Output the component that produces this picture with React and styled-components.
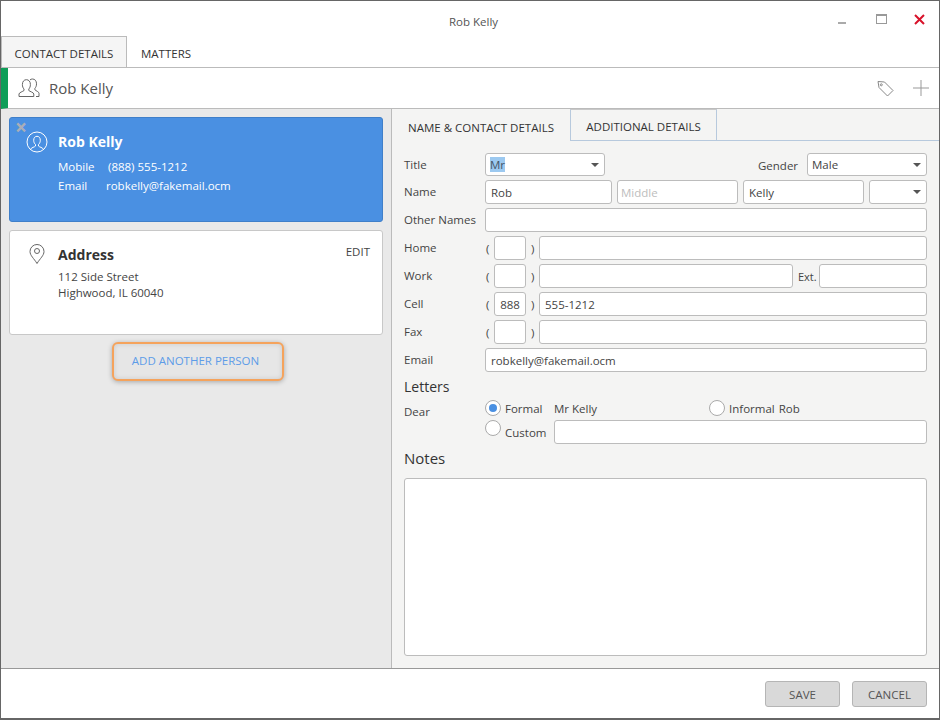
import React from "react";
import styled, { createGlobalStyle } from "styled-components";

const Global = createGlobalStyle`
  html, body { margin: 0; padding: 0; background: #fff; }
  * { box-sizing: border-box; }
  body { font-family: "Open Sans", "Noto Sans", "Liberation Sans", sans-serif; font-size: 11.5px; color: #444; }
`;

const Win = styled.div`
  width: 940px; height: 720px; display: flex; flex-direction: column;
  border: 1px solid #666; border-bottom-width: 2px; border-top-width: 1px; background: #fff; overflow: hidden;
`;
const TitleBar = styled.div`
  height: 35px; flex: none; display: flex; align-items: center; justify-content: center; position: relative; color: #555; font-size: 11.5px;
  padding-top: 6px; padding-left: 7px;
`;
const WinButtons = styled.div`
  position: absolute; right: 0; top: 0; display: block;
`;
const WinSvg = styled.svg`
  display: block; width: 160px; height: 36px;
`;
const TopTabs = styled.div`
  height: 32px; flex: none; display: flex; border-bottom: 1px solid #bbb;
`;
const TopTab = styled.div`
  height: 32px; display: flex; align-items: center; justify-content: center; color: #333; font-size: 11.5px; padding-top: 2px;
  width: ${p => p.$w}px;
  ${p => p.$active ? "background:#f5f5f5;border:1px solid #bbb;border-bottom:1px solid #bbb;" : "padding-right:2px;"}
`;
const Header = styled.div`
  height: 41px; flex: none; display: flex; align-items: center; border-bottom: 1px solid #bbb; border-left: 7px solid #0f9d58;
  padding-left: 10px; padding-right: 10px;
`;
const HeaderName = styled.div`
  font-size: 15px; color: #555; margin-left: 9px; flex: 1; font-weight: 500;
`;
const HeaderIcons = styled.div`
  display: flex; align-items: center; gap: 19px;
`;
const Body = styled.div`
  flex: 1; display: flex; min-height: 0;
`;
const Left = styled.div`
  width: 391px; flex: none; background: #e9e9e9; border-right: 1px solid #bbb; padding: 8px 8px 0 8px;
  display: flex; flex-direction: column; align-items: center;
`;
const Card = styled.div`
  position: relative; width: 100%; flex: none; height: 105px; border-radius: 3px; margin-bottom: ${p => p.$mb}px;
  display: grid; grid-template-columns: 48px 1fr; padding-top: 13px;
  background: ${p => p.$blue ? "#4a90e2" : "#fff"};
  border: 1px solid ${p => p.$blue ? "#3f7fc9" : "#c8c8c8"};
  color: ${p => p.$blue ? "#fff" : "#444"};
`;
const CardIcon = styled.div`
  display: flex; justify-content: center; padding-left: 5px;
`;
const Close = styled.div`
  position: absolute; left: 5px; top: 1px; color: #a9aeb8; font-size: 21px; font-weight: 700; line-height: 16px;
`;
const CardTitle = styled.div`
  font-size: 14px; font-weight: 700; line-height: 20px; margin-top: 1px; margin-bottom: ${p => p.$blue ? 5 : 4}px; color: ${p => p.$blue ? "#fff" : "#333"};
`;
const InfoRow = styled.div`
  display: flex; line-height: 19px; font-size: 11.5px;
`;
const InfoLabel = styled.span`
  width: ${p => p.$w}px; flex: none;
`;
const AddrLine = styled.div`
  line-height: 16px; font-size: 11.5px; color: #444;
`;
const Edit = styled.div`
  position: absolute; right: 12px; top: 13px; font-size: 11.5px; color: #444;
`;
const AddButton = styled.div`
  width: 172px; height: 39px; margin-top: -2px; margin-left: 4px; padding: 0 5px 2px 0; border: 2px solid #f5a35c; border-radius: 6px; color: #5d9ce8;
  display: flex; align-items: center; justify-content: center; font-size: 11.5px; background: #e6e6e6;
  box-shadow: 0 1px 5px rgba(0,0,0,.28), inset 0 0 5px rgba(0,0,0,.12);
`;
const Right = styled.div`
  width: 547px; flex: none; background: #f4f4f3; display: flex; flex-direction: column;
`;
const SubTabs = styled.div`
  height: 32px; flex: none; display: flex; 
`;
const SubTab = styled.div`
  height: 32px; display: flex; align-items: center; justify-content: center; color: #333; font-size: 11.5px;
  width: ${p => p.$w}px;
  ${p => p.$active ? "padding-top:5px;" : "border:1px solid #b7c9dd;border-top-color:#c8c8c8;padding-top:2px;"}
`;
const SubFill = styled.div`
  flex: 1; border-bottom: 1px solid #b7c9dd;
`;
const Form = styled.div`
  flex: 1; display: flex; flex-direction: column; padding: 12px; min-height: 0;
`;
const Row = styled.div`
  display: flex; align-items: stretch; height: ${p => p.$h || 24}px; margin-bottom: ${p => p.$mb ?? 4}px; gap: 5px;
`;
const Label = styled.div`
  width: 76px; flex: none; display: flex; align-items: center; color: #444; padding-bottom: 1px; font-size: 11.5px;
`;
const Input = styled.input`
  flex: ${p => p.$w ? "none" : "1"}; width: ${p => p.$w ? p.$w + "px" : "auto"}; min-width: 0; height: 100%;
  border: 1px solid #bcbcbc; border-radius: 3px; background: #fff; padding: 1px 0 0 ${p => p.$pl ?? 5}px;
  font: inherit; font-size: 11.5px; color: #444; outline: none;
  &::placeholder { color: #bdbdbd; opacity: 1; }
`;
const Select = styled.div`
  flex: none; width: ${p => p.$w}px; position: relative; display: flex; align-items: center; padding-left: 4px;
  height: 100%; border: 1px solid #bcbcbc; border-radius: 3px; background: #fff; color: #444; font-size: 11.5px;
  &::after {
    content: ""; position: absolute; right: 5px; top: 50%; margin-top: -2px;
    border-left: 4px solid transparent; border-right: 4px solid transparent; border-top: 4px solid #555;
  }
`;
const Selected = styled.span`
  background: #9cc9f0; color: #456; 
`;
const GenderLabel = styled.div`
  margin-left: auto; width: 44px; display: flex; align-items: center; color: #444; padding-top: 1px;
`;
const Paren = styled.div`
  width: ${p => p.$w}px; flex: none; display: flex; align-items: center; color: #444; padding-left: ${p => p.$pl || 0}px;
`;
const PhoneArea = styled(Input)`
  padding-left: 0; text-align: center;
`;
const ExtLabel = styled.div`
  flex: none; width: 20px; display: flex; align-items: center; color: #444; font-size: 11px; margin-right: -4px;
`;
const Heading = styled.div`
  color: #333; font-size: ${p => p.$s}px; line-height: 20px; margin-top: ${p => p.$mt}px; margin-bottom: ${p => p.$mb}px;
`;
const LetterGrid = styled.div`
  display: grid; grid-template-columns: 81px 69px 155px minmax(0, 1fr); grid-template-rows: 22px 24px;
`;
const DearLabel = styled.div`
  color: #444; line-height: 20px; padding-top: 4px;
`;
const RadioWrap = styled.div`
  display: flex; height: ${p => p.$top ? 24 : 20}px; align-items: ${p => p.$top ? "flex-start" : "center"}; gap: 4px; color: #444; white-space: nowrap;
`;
const Radio = styled.span`
  width: 16px; height: 16px; border-radius: 50%; border: 1px solid #aaa; background: #fff; flex: none; position: relative;
  ${p => p.$on ? `
    &::after { content: ""; position: absolute; left: 3px; top: 3px; width: 8px; height: 8px; border-radius: 50%; background: #4a90e2; }
  ` : ""}
`;
const GridText = styled.div`
  display: flex; height: 20px; align-items: center; color: #444; gap: 4px;
`;
const CustomText = styled.span`
  padding-top: 5px;
`;
const WideInput = styled(Input)`
  grid-column: 3 / 5; height: 24px;
`;
const Notes = styled.textarea`
  flex: 1; resize: none; border: 1px solid #bcbcbc; border-radius: 3px; background: #fff; outline: none; width: 100%;
`;
const Footer = styled.div`
  height: 50px; flex: none; border-top: 1px solid #999; background: #fff; display: flex; justify-content: flex-end; align-items: flex-start;
  padding: 12px 12px 0 0; gap: 12px;
`;
const Btn = styled.div`
  width: 75px; height: 26px; background: #d9d9d9; border: 1px solid #b5b5b5; border-radius: 3px; color: #555;
  display: flex; align-items: center; justify-content: center; font-size: 11.5px; font-weight: 500;
`;

const Users = () => (
  <svg width="22" height="20" viewBox="0 0 22 20" fill="none" stroke="#666" strokeWidth="1">
    <path d="M1 18.500v-2.500c0-1.500 4-2.500 5-3.500v-1.500c-1-1-1.600-2.500-1.600-4.500 0-3 1.600-4.800 4-4.800s4 1.800 4 4.800c0 2-.6 3.500-1.600 4.500v1.500c1 1 5 2 5 3.500v2.500z"/>
    <path d="M12 1.900c.7-.6 1.500-.9 2.500-.9 2.400 0 4 1.800 4 4.800 0 2-.6 3.500-1.600 4.500v1.500c1 1 4.100 2 4.100 3.500v3.200h-3"/>
  </svg>
);
const PersonCircle = () => (
  <svg width="22" height="22" viewBox="0 0 22 22" fill="none" stroke="#fff" strokeWidth="1">
    <circle cx="11" cy="11" r="10"/>
    <path d="M4.500 18.500c.5-2 4.500-2.500 5-3.500v-1.500c-1-.8-1.800-2.300-1.800-4.200 0-2.500 1.300-4 3.300-4s3.300 1.500 3.300 4c0 1.900-.8 3.400-1.800 4.200v1.500c.5 1 4.500 1.500 5 3.500"/>
  </svg>
);
const Pin = () => (
  <svg width="16" height="20" viewBox="0 0 16 20" fill="none" stroke="#666" strokeWidth="1">
    <path d="M8 19.500C5 14.500 1 11.500 1 7.500a7 7 0 0 1 14 0c0 4-4 7-7 12z"/>
    <circle cx="8" cy="7" r="2.500"/>
  </svg>
);
const Tag = () => (
  <svg width="17" height="17" viewBox="0 0 17 17" fill="none" stroke="#888" strokeWidth="1">
    <path d="M1 1.500l6.500.5 8.500 8.500-5.500 5.500L2 7.500z"/>
    <circle cx="4.300" cy="4.800" r="1"/>
  </svg>
);
const Plus = () => (
  <svg width="16" height="16" viewBox="0 0 16 16" stroke="#999" strokeWidth="1">
    <path d="M8 0v16M0 8h16"/>
  </svg>
);

const Phone = ({ label, area, num, children }) => (
  <Row>
    <Label>{label}</Label>
    <Paren $w={4} $pl={1}>(</Paren>
    <PhoneArea $w={32} defaultValue={area} readOnly />
    <Paren $w={3} $pl={0}>)</Paren>
    {children || <Input defaultValue={num} readOnly />}
  </Row>
);

export default function App() {
  return (
    <Win>
      <Global />
      <TitleBar>
        Rob Kelly
        <WinButtons>
          <WinSvg viewBox="0 0 160 36">
            <rect x="59" y="21" width="8" height="2" fill="#aaa" />
            <rect x="97.500" y="13.500" width="10" height="9" fill="none" stroke="#999" />
            <rect x="97" y="13" width="11" height="2" fill="#999" />
            <path d="M136 14l9 9M145 14l-9 9" stroke="#d8122a" strokeWidth="2" />
          </WinSvg>
        </WinButtons>
      </TitleBar>
      <TopTabs>
        <TopTab $active $w={126}>CONTACT DETAILS</TopTab>
        <TopTab $w={80}>MATTERS</TopTab>
      </TopTabs>
      <Header>
        <Users />
        <HeaderName>Rob Kelly</HeaderName>
        <HeaderIcons><Tag /><Plus /></HeaderIcons>
      </Header>
      <Body>
        <Left>
          <Card $blue $mb={8}>
            <Close>×</Close>
            <CardIcon><PersonCircle /></CardIcon>
            <div>
              <CardTitle $blue>Rob Kelly</CardTitle>
              <InfoRow><InfoLabel $w={50}>Mobile</InfoLabel>(888) 555-1212</InfoRow>
              <InfoRow><InfoLabel $w={48}>Email</InfoLabel>robkelly@fakemail.ocm</InfoRow>
            </div>
          </Card>
          <Card $mb={9}>
            <CardIcon><Pin /></CardIcon>
            <div>
              <CardTitle>Address</CardTitle>
              <AddrLine>112 Side Street</AddrLine>
              <AddrLine>Highwood, IL 60040</AddrLine>
            </div>
            <Edit>EDIT</Edit>
          </Card>
          <AddButton>ADD ANOTHER PERSON</AddButton>
        </Left>
        <Right>
          <SubTabs>
            <SubTab $active $w={178}>NAME &amp; CONTACT DETAILS</SubTab>
            <SubTab $w={147}>ADDITIONAL DETAILS</SubTab>
            <SubFill />
          </SubTabs>
          <Form>
            <Row $h={23} $mb={4}>
              <Label>Title</Label>
              <Select $w={120}><Selected>Mr</Selected></Select>
              <GenderLabel>Gender</GenderLabel>
              <Select $w={120}>Male</Select>
            </Row>
            <Row>
              <Label>Name</Label>
              <Input $w={127} defaultValue="Rob" readOnly />
              <Input $w={121} $pl={3} placeholder="Middle" readOnly />
              <Input $w={121} defaultValue="Kelly" readOnly />
              <Select $w={58} />
            </Row>
            <Row>
              <Label>Other Names</Label>
              <Input readOnly />
            </Row>
            <Phone label="Home" />
            <Phone label="Work">
              <Input $w={254} readOnly />
              <ExtLabel>Ext.</ExtLabel>
              <Input readOnly />
            </Phone>
            <Phone label="Cell" area="888" num="555-1212" />
            <Phone label="Fax" />
            <Row>
              <Label>Email</Label>
              <Input defaultValue="robkelly@fakemail.ocm" readOnly />
            </Row>
            <Heading $s={14} $mt={1} $mb={1}>Letters</Heading>
            <LetterGrid>
              <DearLabel>Dear</DearLabel>
              <RadioWrap><Radio $on />Formal</RadioWrap>
              <GridText>Mr Kelly</GridText>
              <GridText>
                <RadioWrap><Radio />Informal</RadioWrap>
                Rob
              </GridText>
              <span />
              <RadioWrap $top><Radio /><CustomText>Custom</CustomText></RadioWrap>
              <WideInput readOnly />
            </LetterGrid>
            <Heading $s={15} $mt={4} $mb={10}>Notes</Heading>
            <Notes readOnly />
          </Form>
        </Right>
      </Body>
      <Footer>
        <Btn>SAVE</Btn>
        <Btn>CANCEL</Btn>
      </Footer>
    </Win>
  );
}
